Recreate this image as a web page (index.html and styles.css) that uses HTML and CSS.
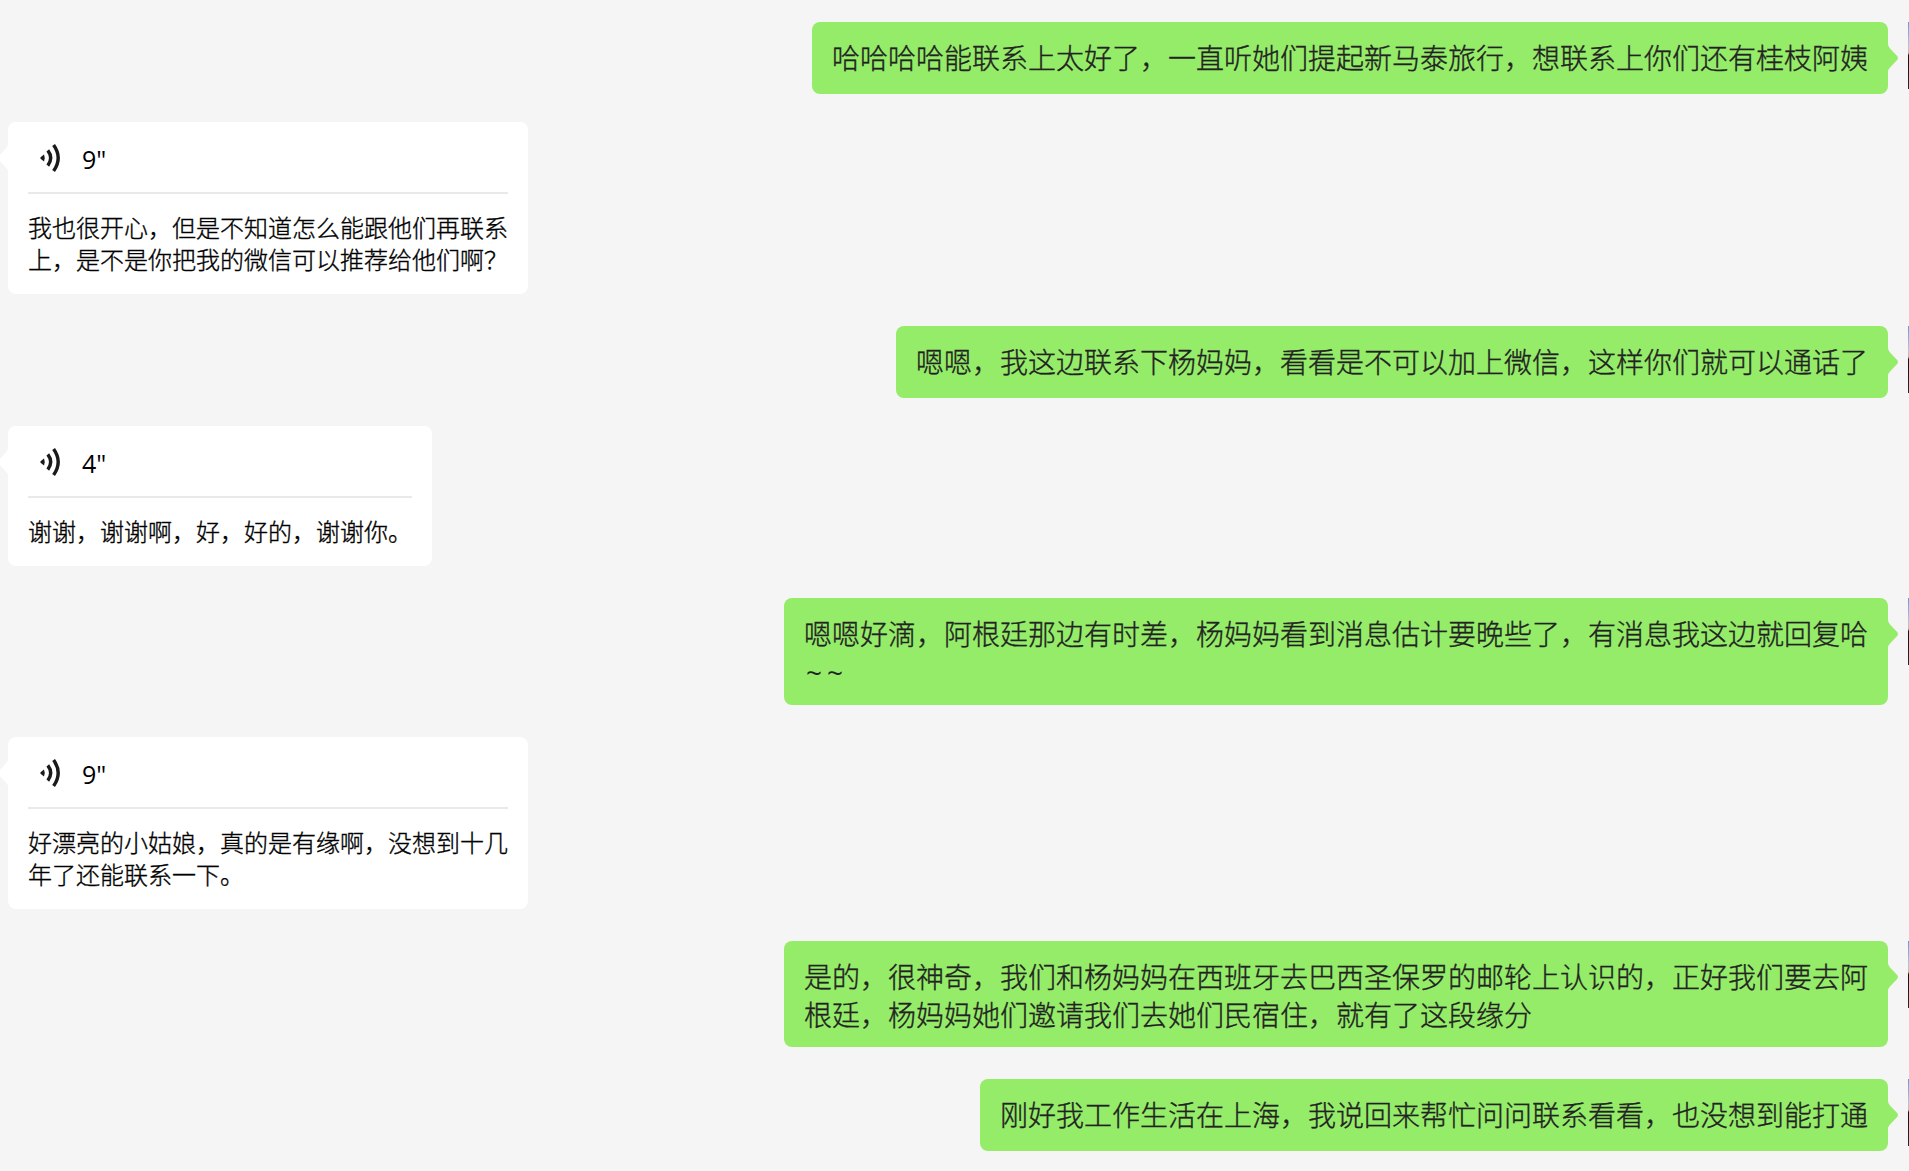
FILE: index.html
```html
<!DOCTYPE html>
<html lang="zh-CN">
<head>
    <meta charset="UTF-8">
    <title>聊天记录</title>
    <link rel="stylesheet" href="styles.css">
</head>
<body>
    <!-- speaker icon, shared by all voice messages -->
    <svg class="defs" width="0" height="0">
        <symbol id="voice" viewBox="0 0 22 30">
            <path class="dot" d="M0.6 14.2 L4 11.4 Q5.6 15 4 18.6 L0.6 15.8 Q0 15 0.6 14.2 Z"/>
            <path class="wave" d="M7.8 7.4 Q13.6 15 7.8 22.6"/>
            <path class="wave" d="M13.6 2 Q22.8 15 13.6 28"/>
        </symbol>
    </svg>

    <div class="chat">
        <div class="row me">
            <div class="bubble">哈哈哈哈能联系上太好了，一直听她们提起新马泰旅行，想联系上你们还有桂枝阿姨</div>
            <div class="avatar"></div>
        </div>
        <div class="row other after-single">
            <div class="bubble">
                <div class="voice"><svg class="icon"><use href="#voice"/></svg><span>9"</span></div>
                <div class="text">我也很开心，但是不知道怎么能跟他们再联系<br>上，是不是你把我的微信可以推荐给他们啊？</div>
            </div>
        </div>
        <div class="row me">
            <div class="bubble">嗯嗯，我这边联系下杨妈妈，看看是不可以加上微信，这样你们就可以通话了</div>
            <div class="avatar"></div>
        </div>
        <div class="row other after-single">
            <div class="bubble short">
                <div class="voice"><svg class="icon"><use href="#voice"/></svg><span>4"</span></div>
                <div class="text">谢谢，谢谢啊，好，好的，谢谢你。</div>
            </div>
        </div>
        <div class="row me">
            <div class="bubble multi">嗯嗯好滴，阿根廷那边有时差，杨妈妈看到消息估计要晚些了，有消息我这边就回复哈<br><span class="tilde">~~</span></div>
            <div class="avatar"></div>
        </div>
        <div class="row other">
            <div class="bubble">
                <div class="voice"><svg class="icon"><use href="#voice"/></svg><span>9"</span></div>
                <div class="text">好漂亮的小姑娘，真的是有缘啊，没想到十几<br>年了还能联系一下。</div>
            </div>
        </div>
        <div class="row me">
            <div class="bubble multi">是的，很神奇，我们和杨妈妈在西班牙去巴西圣保罗的邮轮上认识的，正好我们要去阿<br>根廷，杨妈妈她们邀请我们去她们民宿住，就有了这段缘分</div>
            <div class="avatar"></div>
        </div>
        <div class="row me">
            <div class="bubble">刚好我工作生活在上海，我说回来帮忙问问联系看看，也没想到能打通</div>
            <div class="avatar"></div>
        </div>
    </div>
</body>
</html>
```

FILE: styles.css
```css
* {
    box-sizing: border-box;
}

body {
    margin: 0;
    height: 1171px;
    background: #f5f5f5;
    font-family: "Noto Sans CJK SC", sans-serif;
    font-weight: 300;
    overflow: hidden;
}

.defs {
    display: block;
}

.chat {
    padding-top: 22px;
}

.row {
    display: flex;
    align-items: flex-start;
    margin-bottom: 32px;
}

.row.me {
    justify-content: flex-end;
}

/* voice messages sit a bit closer to a one-line message */
.row.after-single {
    margin-top: -4px;
}

.bubble {
    position: relative;
    border-radius: 8px;
    white-space: nowrap;
    -webkit-text-stroke: 0.35px; /* light weight is a bit too thin */
}

/* My messages (green) */
.me .bubble {
    padding: 16px 20px 18px;
    background: #95ec69;
    color: #222;
    font-size: 28px;
    line-height: 38px;
}

.me .bubble.multi {
    padding-bottom: 14px;
}

/* The little arrow on the side of a bubble */
.bubble::after {
    content: "";
    position: absolute;
    top: 22px;
    width: 11px;
    height: 28px;
    clip-path: path("M0 0 L1 0 Q1 2.5 3 4.5 L10.4 12.3 Q11.6 14 10.4 15.7 L3 23.5 Q1 25.5 1 28 L0 28 Z");
}

.me .bubble::after {
    right: -10px;
    background: #95ec69;
}

.other .bubble::after {
    left: -10px;
    background: #fff;
    transform: scaleX(-1);
}

.tilde {
    font-family: "Open Sans", sans-serif;
    font-weight: 400;
    letter-spacing: 5px;
    margin-left: 2px;
    -webkit-text-stroke: 0;
}

/* Only the edge of the avatar is visible */
.avatar {
    width: 1px;
    height: 67px;
    margin-left: 20px;
    background: linear-gradient(#5b9be0, #a9c8e4 35%, #d5b59b 46%, #15110f 50%, #282b1c);
}

/* Voice messages (white) */
.other .bubble {
    width: 520px;
    margin-left: 8px;
    padding: 0 20px 19px;
    background: #fff;
    color: #000;
    font-size: 24px;
    line-height: 32px;
}

.other .bubble.short {
    width: 424px;
}

.voice {
    display: flex;
    align-items: center;
    height: 72px;
    padding: 2px 0 0 12px;
    margin-bottom: 17px;
    border-bottom: 2px solid #e9e9e9;
    font-family: "Open Sans", sans-serif;
    font-weight: 400;
    font-size: 25px;
    -webkit-text-stroke: 0;
}

.voice span {
    padding-top: 2px;
}

.icon {
    width: 22px;
    height: 30px;
    margin-right: 20px;
}

.dot {
    fill: #1a1a1a;
}

.wave {
    fill: none;
    stroke: #1a1a1a;
    stroke-width: 3.4;
}
```
